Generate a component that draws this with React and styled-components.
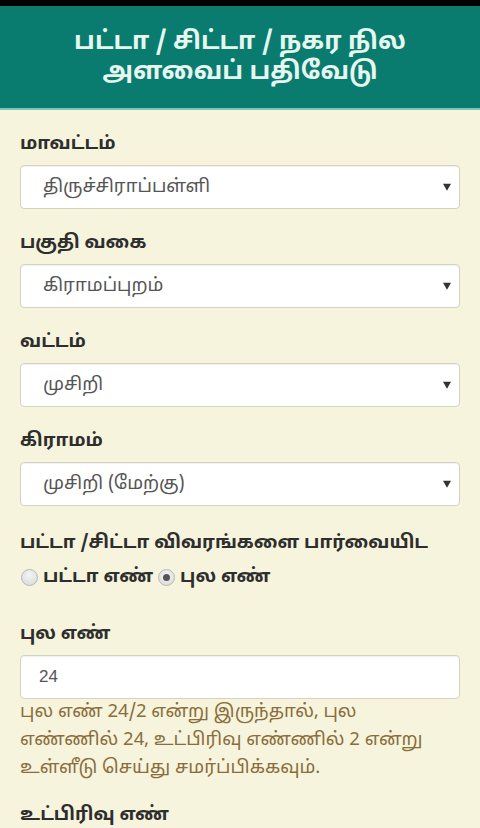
import React, { useState } from 'react';
import styled, { createGlobalStyle } from 'styled-components';

const GlobalStyle = createGlobalStyle`
  html, body {
    margin: 0;
    padding: 0;
    background: #f6f4dc;
  }
  body {
    font-family: "Noto Sans Tamil", "Lohit Tamil", "Noto Sans", "Liberation Sans", sans-serif;
  }
  * {
    box-sizing: border-box;
  }
`;

const Page = styled.div`
  width: 480px;
  min-height: 828px;
  background: #f6f4dc;
  border-top: 6px solid #000;
`;

const Header = styled.header`
  background: #0a7b6f;
  border-bottom: 2px solid #7fc4b8;
  padding: 22px 20px 20px;
  text-align: center;
`;

const Title = styled.h1`
  margin: 0;
  color: #e6f7ef;
  font-size: 25px;
  font-weight: 700;
  line-height: 30px;
`;

const Form = styled.form`
  padding: 22px 20px 0;
  display: flex;
  flex-direction: column;
`;

const Field = styled.div`
  display: flex;
  flex-direction: column;
  margin-top: ${(p) => p.top ?? 0}px;
  margin-bottom: ${(p) => p.gap ?? 22}px;
`;

const Label = styled.label`
  color: #2e2e2e;
  font-size: 18.5px;
  font-weight: 700;
  line-height: 26px;
  margin-bottom: 7px;
`;

const SelectBox = styled.div`
  position: relative;
  height: 44px;
  background: #fff;
  border: 1px solid #d4d2c0;
  border-radius: 4px;
  box-shadow: inset 0 1px 1px rgba(0, 0, 0, 0.06);
  display: flex;
  align-items: center;
  padding: 0 40px 0 22px;
  color: #555;
  font-size: 18.5px;
`;

const Arrow = styled.span`
  position: absolute;
  right: 8px;
  top: 50%;
  transform: translateY(-45%);
  width: 0;
  height: 0;
  border-left: 4px solid transparent;
  border-right: 4px solid transparent;
  border-top: 7px solid #333;
`;

const TextInput = styled.input`
  height: 44px;
  background: #fff;
  border: 1px solid #d4d2c0;
  border-radius: 4px;
  box-shadow: inset 0 1px 1px rgba(0, 0, 0, 0.06);
  padding: 0 18px;
  color: #555;
  font-size: 17px;
  font-family: "Liberation Sans", sans-serif;
  outline: none;
`;

const Hint = styled.p`
  margin: 0;
  color: #8a6d3b;
  font-size: 18.5px;
  line-height: 28px;
`;

const RadioRow = styled.div`
  display: flex;
  align-items: center;
  margin-top: 2px;
`;

const RadioLabel = styled.label`
  display: flex;
  align-items: center;
  color: #2e2e2e;
  font-size: 18.5px;
  font-weight: 700;
  margin-right: 4px;
`;

const Radio = styled.input.attrs({ type: 'radio' })`
  appearance: none;
  width: 17px;
  height: 17px;
  margin: 0 5px 0 1px;
  border-radius: 50%;
  border: 1px solid #b8b8b8;
  background: radial-gradient(circle at 50% 35%, #f4f4f4 0%, #d8d8d8 100%);
  position: relative;

  &:checked::after {
    content: '';
    position: absolute;
    left: 4px;
    top: 4px;
    width: 7px;
    height: 7px;
    border-radius: 50%;
    background: #555;
  }
`;

const selects = [
  { label: 'மாவட்டம்', value: 'திருச்சிராப்பள்ளி' },
  { label: 'பகுதி வகை', value: 'கிராமப்புறம்' },
  { label: 'வட்டம்', value: 'முசிறி' },
  { label: 'கிராமம்', value: 'முசிறி (மேற்கு)' },
];

export default function App() {
  const [mode, setMode] = useState('pula');

  return (
    <>
      <GlobalStyle />
      <Page>
        <Header>
          <Title>
            பட்டா / சிட்டா / நகர நில
            <br />
            அளவைப் பதிவேடு
          </Title>
        </Header>
        <Form onSubmit={(e) => e.preventDefault()}>
          {selects.map((s) => (
            <Field key={s.label}>
              <Label>{s.label}</Label>
              <SelectBox>
                {s.value}
                <Arrow />
              </SelectBox>
            </Field>
          ))}
          <Field top={3} gap={33}>
            <Label>பட்டா /சிட்டா விவரங்களை பார்வையிட</Label>
            <RadioRow>
              <RadioLabel>
                <Radio
                  name="mode"
                  checked={mode === 'patta'}
                  onChange={() => setMode('patta')}
                />
                பட்டா எண்
              </RadioLabel>
              <RadioLabel>
                <Radio
                  name="mode"
                  checked={mode === 'pula'}
                  onChange={() => setMode('pula')}
                />
                புல எண்
              </RadioLabel>
            </RadioRow>
          </Field>
          <Field gap={20}>
            <Label>புல எண்</Label>
            <TextInput defaultValue="24" />
            <Hint>
              புல எண் 24/2 என்று இருந்தால், புல
              <br />
              எண்ணில் 24, உட்பிரிவு எண்ணில் 2 என்று
              <br />
              உள்ளீடு செய்து சமர்ப்பிக்கவும்.
            </Hint>
          </Field>
          <Field>
            <Label>உட்பிரிவு எண்</Label>
          </Field>
        </Form>
      </Page>
    </>
  );
}
